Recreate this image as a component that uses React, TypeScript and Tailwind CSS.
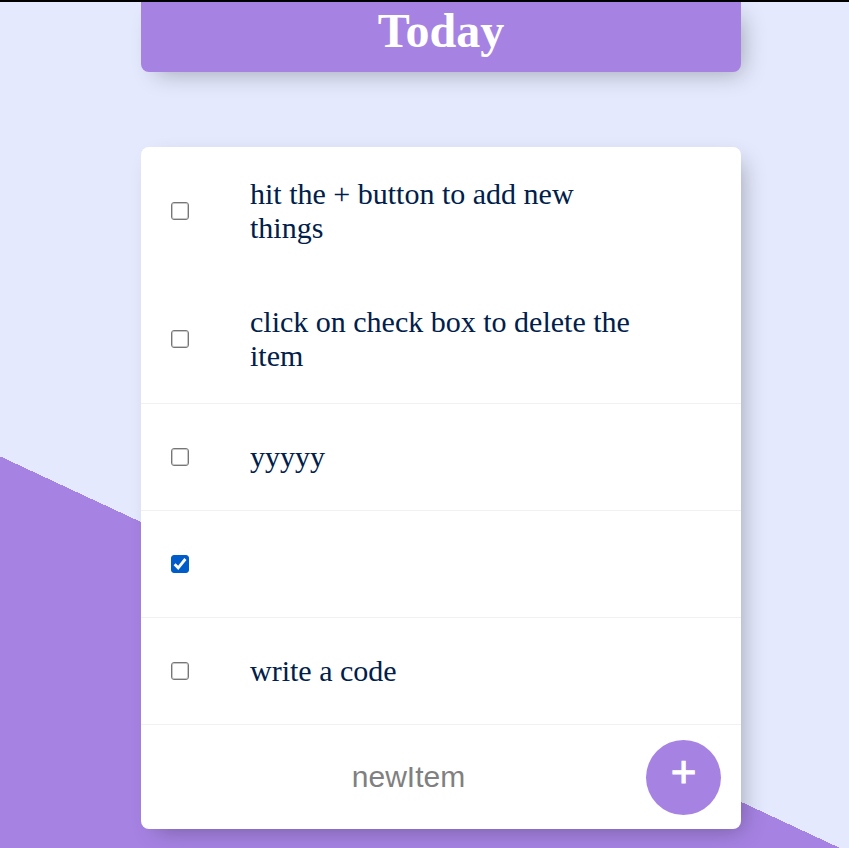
import { useState } from "react";

type Item = { id: string; text: string; checked: boolean; divider: boolean };

const initialItems: Item[] = [
  { id: "intro-add", text: "hit the + button to add new things", checked: false, divider: false },
  { id: "intro-delete", text: "click on check box to delete the item", checked: false, divider: true },
  { id: "item-1", text: "yyyyy", checked: false, divider: true },
  { id: "item-2", text: "", checked: true, divider: true },
  { id: "item-3", text: "write a code", checked: false, divider: true },
];

function TodoRow({ item, onToggle }: { item: Item; onToggle: () => void }) {
  return (
    <li
      className={
        item.divider
          ? "flex min-h-[107px] items-center border-b border-[#f1f1f1]"
          : "flex min-h-[107px] items-center"
      }
    >
      <span className="mx-[30px] grid size-[18px] shrink-0 place-items-center">
        <input
          id={item.id}
          type="checkbox"
          checked={item.checked}
          onChange={onToggle}
          aria-label={item.text || "Empty item"}
          className="peer col-start-1 row-start-1 size-[18px] appearance-none rounded-[3px] border border-[#767676] bg-white shadow-[inset_0_0_0_1px_rgba(118,118,118,0.4)] checked:border-[#005cc8] checked:bg-[#005cc8] checked:shadow-none"
        />
        <svg
          viewBox="0 0 18 18"
          aria-hidden="true"
          className="pointer-events-none invisible col-start-1 row-start-1 size-[18px] peer-checked:visible"
        >
          <path d="M3.6 9.2 7.2 12.8 14.4 4" fill="none" stroke="white" strokeWidth="2.8" />
        </svg>
      </span>
      <label htmlFor={item.id} className="w-[450px] py-[30px] pr-[30px] pl-[31px] text-[30px] leading-[34px] text-[#00204a]">
        {item.text}
      </label>
    </li>
  );
}

export default function App() {
  const [items, setItems] = useState(initialItems);
  const [draft, setDraft] = useState("");

  const toggle = (id: string) =>
    setItems(items.map((i) => (i.id === id ? { ...i, checked: !i.checked } : i)));

  const add = () => {
    setItems([...items, { id: `item-${items.length}`, text: draft, checked: false, divider: true }]);
    setDraft("");
  };

  return (
    <div className="flex min-h-screen flex-col border-t-2 border-black font-['Liberation_Serif','Times_New_Roman',serif]">
      <main className="grow bg-[linear-gradient(25deg,#a683e3_355px,#e4e9fd_355px)] pb-[19px] pl-[33px]">
        <header className="mx-auto flex h-[70px] max-w-[600px] justify-center rounded-b-lg bg-[#a683e3] shadow-[8px_8px_23px_-7px_rgba(0,0,0,0.3)]">
          <h1 className="text-5xl leading-[58px] font-bold text-white">Today</h1>
        </header>

        <section className="mx-auto mt-[75px] max-w-[600px] rounded-lg bg-white shadow-[8px_8px_23px_-7px_rgba(0,0,0,0.3)]">
          <ul>
            {items.map((item) => (
              <TodoRow key={item.id} item={item} onToggle={() => toggle(item.id)} />
            ))}
          </ul>
          <form
            className="flex h-[104px] items-center pr-5 pl-[30px] font-['Liberation_Sans',Arial,sans-serif]"
            onSubmit={(e) => {
              e.preventDefault();
              add();
            }}
          >
            <input
              type="text"
              value={draft}
              onChange={(e) => setDraft(e.target.value)}
              placeholder="newItem"
              aria-label="New item"
              autoComplete="off"
              className="h-[90px] min-w-0 grow bg-transparent text-center text-[30px] text-[#00204a] outline-none placeholder:text-[#808080]"
            />
            <button
              type="submit"
              aria-label="Add item"
              className="flex size-[75px] shrink-0 items-center justify-center rounded-full bg-[#a683e3] pb-2.5 text-[44px] leading-none text-white [-webkit-text-stroke:1px_white]"
            >
              +
            </button>
          </form>
        </section>
      </main>
    </div>
  );
}
